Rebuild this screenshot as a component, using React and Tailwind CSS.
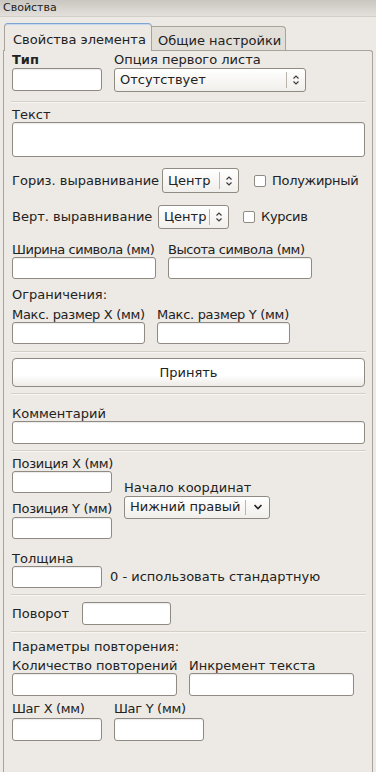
import React from 'react';

// Панель свойств элемента в стиле старого GTK (Clearlooks)

const Label = ({ children, className = '' }) => (
    <div className={`h-[15px] leading-[15px] whitespace-nowrap ${className}`}>{children}</div>
);

const Field = ({ w, h = 'h-[22px]', className = '' }) => (
    <div className={`${w} ${h} bg-white border border-[#8f8a82] rounded-[3px] shadow-[inset_0_1px_1px_rgba(0,0,0,0.08)] ${className}`} />
);

const UpDown = () => (
    <svg width="8" height="12" viewBox="0 0 8 12" className="text-[#3c3c3c]">
        <path d="M1.5 4.5 L4 2 L6.5 4.5" fill="none" stroke="currentColor" strokeWidth="1.2" />
        <path d="M1.5 7.5 L4 10 L6.5 7.5" fill="none" stroke="currentColor" strokeWidth="1.2" />
    </svg>
);

const Down = () => (
    <svg width="10" height="8" viewBox="0 0 10 8" className="text-[#222]">
        <path d="M1.5 2 L5 5.5 L8.5 2" fill="none" stroke="currentColor" strokeWidth="1.6" />
    </svg>
);

const Combo = ({ w, h = 'h-[24px]', text, arrowW = 'w-[18px]', down = false }) => (
    <div className={`${w} ${h} flex items-stretch bg-gradient-to-b from-white to-[#f1efeb] border border-[#8f8a82] rounded-[3px]`}>
        <div className="flex-1 flex items-center pl-[5px] whitespace-nowrap overflow-hidden">{text}</div>
        <div className="my-[3px] w-px bg-[#b9b4ac]" />
        <div className={`${arrowW} flex items-center justify-center`}>{down ? <Down /> : <UpDown />}</div>
    </div>
);

const Check = ({ label }) => (
    <div className="flex items-center">
        <div className="w-[12px] h-[12px] bg-white border border-[#8f8a82] rounded-[2px]" />
        <span className="ml-[6px] whitespace-nowrap tracking-[-0.3px]">{label}</span>
    </div>
);

const Sep = ({ className = '' }) => (
    <div className={`-mx-[1px] border-t border-[#d4cfc7] border-b border-b-[#f7f6f3] ${className}`} />
);

export default function App() {
    return (
        <div
            className="w-[376px] h-[772px] overflow-hidden bg-[#edeae5] text-[13px] text-[#222] flex flex-col"
            style={{ fontFamily: '"DejaVu Sans", "Liberation Sans", sans-serif' }}
        >
            {/* заголовок */}
            <div className="h-[17px] shrink-0 bg-gradient-to-b from-[#cac7c1] to-[#e3e0db] border-b border-[#d2cec8] pl-[3px] text-[11px] leading-[16px]">
                Свойства
            </div>

            {/* вкладки */}
            <div className="mt-[6px] pl-[4px] flex items-end relative z-10 shrink-0">
                <div className="w-[148px] h-[28px] bg-[#edeae5] border border-b-0 border-[#a8a39b] border-t-[#7ea4d3] rounded-t-[4px] pl-[8px] pt-[6px] shadow-[inset_0_1px_0_#c6d8ee]">
                    Свойства элемента
                </div>
                <div className="w-[134px] h-[24px] mb-px bg-[#e2dfd9] border border-b-0 border-l-0 border-[#a8a39b] rounded-tr-[4px] pl-[6px] pt-[4px]">
                    Общие настройки
                </div>
            </div>

            {/* панель */}
            <div className="-mt-px ml-[3px] w-[370px] h-[740px] shrink-0 border border-b-0 border-[#a8a39b] rounded-tr-[3px] pl-[8px] pr-[7px]">
                {/* тип / опция */}
                <div className="mt-[1px] flex gap-[12px]">
                    <div className="w-[90px]">
                        <div className="h-[16px] leading-[15px] font-bold">Тип</div>
                        <Field w="w-[90px]" h="h-[23px]" />
                    </div>
                    <div>
                        <div className="h-[16px] leading-[16px]">Опция первого листа</div>
                        <Combo w="w-[192px]" text="Отсутствует" />
                    </div>
                </div>

                <Sep className="mt-[9px]" />

                <Label className="mt-[4px]">Текст</Label>
                <Field w="w-full" h="h-[35px]" />

                {/* выравнивание */}
                <div className="mt-[11px] flex items-center h-[25px]">
                    <div className="w-[150px] whitespace-nowrap">Гориз. выравнивание</div>
                    <Combo w="w-[77px]" h="h-[25px]" text="Центр" />
                    <div className="ml-[15px]">
                        <Check label="Полужирный" />
                    </div>
                </div>
                <div className="mt-[12px] flex items-center h-[24px]">
                    <div className="w-[146px] whitespace-nowrap">Верт. выравнивание</div>
                    <Combo w="w-[71px]" text="Центр" />
                    <div className="ml-[14px]">
                        <Check label="Курсив" />
                    </div>
                </div>

                {/* размер символа */}
                <div className="mt-[13px] flex gap-[12px]">
                    <div className="w-[144px]">
                        <Label className="tracking-[-0.45px]">Ширина символа (мм)</Label>
                        <Field w="w-[144px]" />
                    </div>
                    <div className="w-[144px]">
                        <Label className="tracking-[-0.45px]">Высота символа (мм)</Label>
                        <Field w="w-[144px]" />
                    </div>
                </div>

                <Label className="mt-[8px]">Ограничения:</Label>
                <div className="mt-[5px] flex gap-[12px]">
                    <div className="w-[133px]">
                        <Label className="tracking-[-0.3px]">Макс. размер X (мм)</Label>
                        <Field w="w-[133px]" />
                    </div>
                    <div className="w-[133px]">
                        <Label className="tracking-[-0.3px]">Макс. размер Y (мм)</Label>
                        <Field w="w-[133px]" />
                    </div>
                </div>

                <Sep className="mt-[7px]" />

                <button className="mt-[5px] w-full h-[29px] bg-gradient-to-b from-white from-60% to-[#eeebe6] border border-[#8f8a82] rounded-[4px] flex items-center justify-center">
                    Принять
                </button>

                <Sep className="mt-[6px]" />

                <Label className="mt-[11px]">Комментарий</Label>
                <Field w="w-full" h="h-[23px]" />

                <Sep className="mt-[6px]" />

                {/* позиция */}
                <div className="mt-[4px] flex">
                    <div className="w-[112px]">
                        <Label className="tracking-[-0.3px]">Позиция X (мм)</Label>
                        <Field w="w-[100px]" />
                        <div className="mt-[8px] h-[16px] leading-[15px] whitespace-nowrap tracking-[-0.3px]">Позиция Y (мм)</div>
                        <Field w="w-[100px]" />
                    </div>
                    <div className="flex flex-col justify-center pt-[3px]">
                        <Label className="mb-[1px]">Начало координат</Label>
                        <Combo w="w-[146px]" h="h-[23px]" text="Нижний правый" arrowW="w-[23px]" down />
                    </div>
                </div>

                {/* толщина */}
                <Label className="mt-[12px]">Толщина</Label>
                <div className="flex items-center">
                    <Field w="w-[90px]" />
                    <span className="ml-[8px] whitespace-nowrap">0 - использовать стандартную</span>
                </div>

                <Sep className="mt-[6px]" />

                <div className="mt-[6px] flex items-center">
                    <div className="w-[70px]">Поворот</div>
                    <Field w="w-[89px]" h="h-[23px]" />
                </div>

                <Sep className="mt-[6px]" />

                {/* повторение */}
                <Label className="mt-[6px]">Параметры повторения:</Label>
                <div className="mt-[4px] flex gap-[12px]">
                    <div className="w-[165px]">
                        <Label>Количество повторений</Label>
                        <Field w="w-[165px]" h="h-[23px]" />
                    </div>
                    <div className="w-[165px]">
                        <Label>Инкремент текста</Label>
                        <Field w="w-[165px]" h="h-[23px]" />
                    </div>
                </div>
                <div className="mt-[5px] flex gap-[12px]">
                    <div className="w-[90px]">
                        <div className="h-[17px] leading-[15px] whitespace-nowrap tracking-[-0.3px]">Шаг X (мм)</div>
                        <Field w="w-[90px]" h="h-[23px]" />
                    </div>
                    <div className="w-[90px]">
                        <div className="h-[17px] leading-[15px] whitespace-nowrap tracking-[-0.3px]">Шаг Y (мм)</div>
                        <Field w="w-[90px]" h="h-[23px]" />
                    </div>
                </div>
            </div>
        </div>
    );
}
